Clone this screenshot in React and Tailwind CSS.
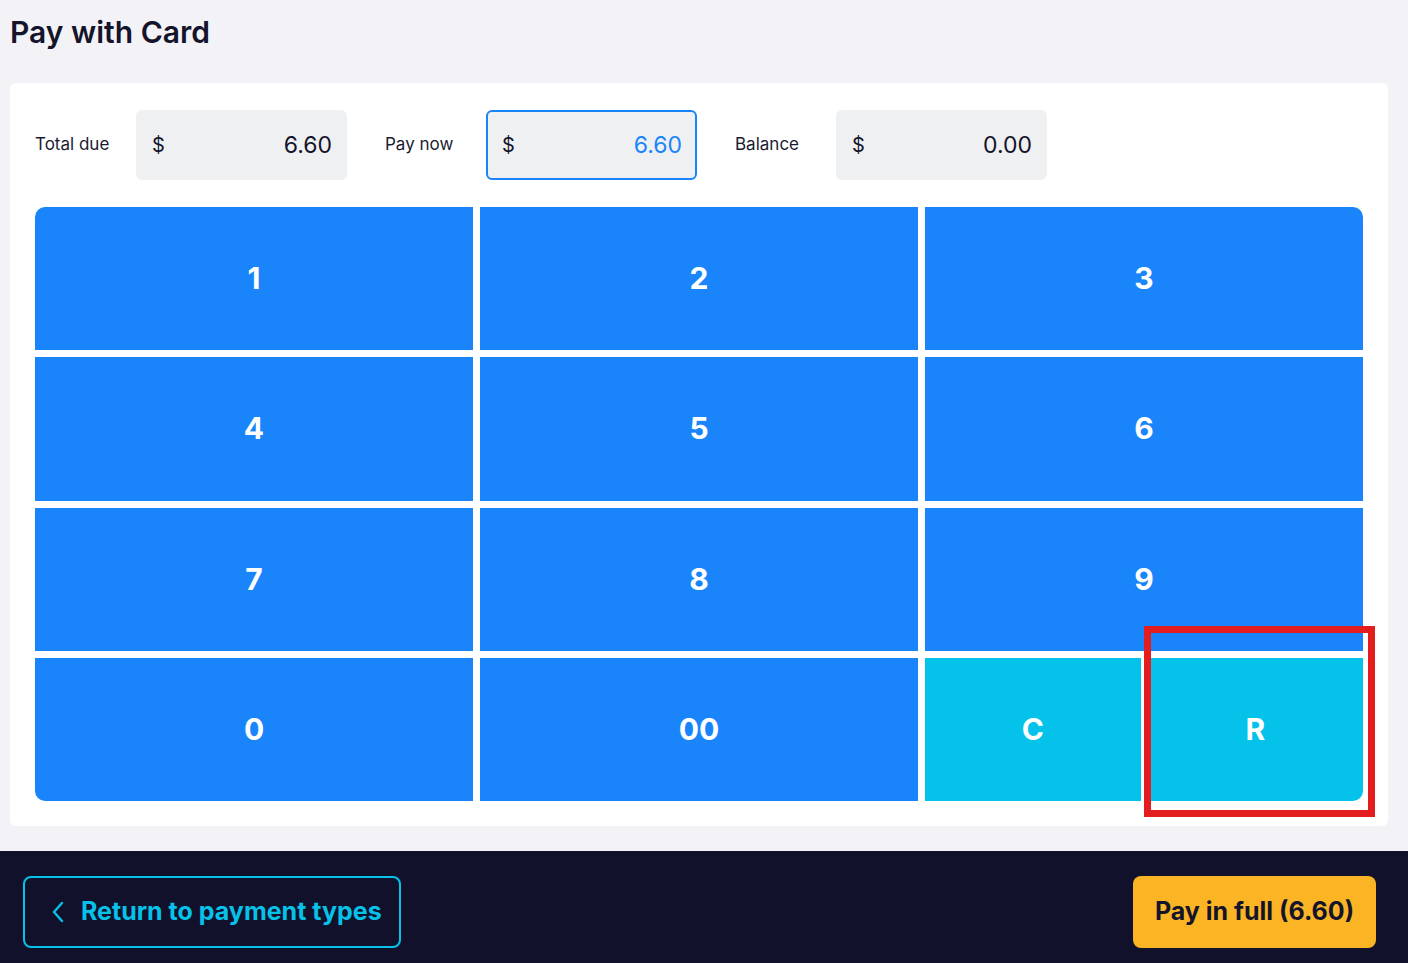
import React from "react";

const keys = ["1", "2", "3", "4", "5", "6", "7", "8", "9", "0", "00"];

function AmountField({ label, value, active }) {
  return (
    <div className="flex items-center">
      <div className="w-[101px] text-[17px] text-[#1b1b2f]">{label}</div>
      <div
        className={
          "w-[211px] h-[70px] rounded-[6px] bg-[#eff0f2] flex items-center justify-between pl-[14px] pr-[13px] " +
          (active ? "border-2 border-[#1a85fa]" : "border-2 border-transparent")
        }
      >
        <span className="text-[20px] text-[#14142b]">$</span>
        <span className={"text-[23px] " + (active ? "text-[#1a85fa]" : "text-[#14142b]")}>{value}</span>
      </div>
    </div>
  );
}

export default function App() {
  return (
    <div
      className="min-h-screen flex flex-col bg-[#f3f3f7]"
      style={{ fontFamily: "Inter, 'Noto Sans', sans-serif" }}
    >
      <div className="flex-1 pl-[10px] pr-[20px]">
        <h1 className="pt-[12px] h-[83px] leading-[40px] text-[30px] font-semibold text-[#14142b]">
          Pay with Card
        </h1>
        <div className="bg-white rounded-[6px] px-[25px] pt-[27px] pb-[25px]">
          <div className="flex items-center gap-[38px]">
            <AmountField label="Total due" value="6.60" />
            <AmountField label="Pay now" value="6.60" active />
            <AmountField label="Balance" value="0.00" />
          </div>
          <div className="relative mt-[27px]">
            <div className="grid grid-cols-3 grid-rows-4 gap-[7px] h-[594px] rounded-[10px] overflow-hidden">
              {keys.map((k) => (
                <button
                  key={k}
                  className="bg-[#1a85fa] text-white text-[30px] font-bold flex items-center justify-center"
                >
                  {k}
                </button>
              ))}
              <div className="grid grid-cols-2 gap-[7px]">
                <button className="bg-[#04c2ea] text-white text-[30px] font-bold flex items-center justify-center">
                  C
                </button>
                <button className="bg-[#04c2ea] text-white text-[30px] font-bold flex items-center justify-center">
                  R
                </button>
              </div>
            </div>
            <div className="absolute left-[1109px] top-[419px] w-[231px] h-[191px] border-[7px] border-[#e41e1e] pointer-events-none" />
          </div>
        </div>
      </div>
      <footer className="mt-[25px] h-[112px] bg-[#11112b] flex items-start justify-between pt-[25px] pl-[23px] pr-[32px]">
        <button className="h-[72px] w-[378px] rounded-[8px] border-2 border-[#06c1e8] flex items-center pl-[26px] gap-[16px] text-[#06c1e8] text-[25px] font-bold">
          <svg width="14" height="22" viewBox="0 0 14 22" fill="none">
            <path d="M11 2 L3 11 L11 20" stroke="#06c1e8" strokeWidth="2.4" strokeLinecap="round" strokeLinejoin="round" />
          </svg>
          Return to payment types
        </button>
        <button className="h-[72px] w-[243px] rounded-[8px] bg-[#fbb423] text-[#14142b] text-[25px] font-bold flex items-center justify-center">
          Pay in full (6.60)
        </button>
      </footer>
    </div>
  );
}
